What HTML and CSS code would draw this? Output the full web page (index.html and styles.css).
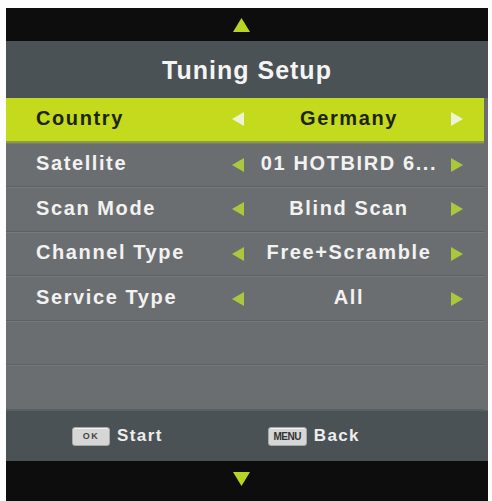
FILE: index.html
```html
<!DOCTYPE html>
<html lang="en">
<head>
    <meta charset="UTF-8">
    <meta name="viewport" content="width=device-width, initial-scale=1.0">
    <title>Tuning Setup</title>
    <link rel="stylesheet" href="styles.css">
</head>
<body>
    <div class="osd">
        <div class="nav-bar nav-top">
            <svg class="nav-arrow" width="17" height="14" viewBox="0 0 17 14"><polygon points="8.5,0 17,14 0,14" /></svg>
        </div>

        <div class="title">Tuning Setup</div>

        <div class="menu">
            <div class="row selected">
                <span class="label">Country</span>
                <svg class="arrow" width="12" height="14" viewBox="0 0 12 14"><polygon points="0,7 12,0 12,14" /></svg>
                <span class="value">Germany</span>
                <svg class="arrow" width="12" height="14" viewBox="0 0 12 14"><polygon points="12,7 0,0 0,14" /></svg>
            </div>
            <div class="row">
                <span class="label">Satellite</span>
                <svg class="arrow" width="12" height="14" viewBox="0 0 12 14"><polygon points="0,7 12,0 12,14" /></svg>
                <span class="value">01 HOTBIRD 6...</span>
                <svg class="arrow" width="12" height="14" viewBox="0 0 12 14"><polygon points="12,7 0,0 0,14" /></svg>
            </div>
            <div class="row">
                <span class="label">Scan Mode</span>
                <svg class="arrow" width="12" height="14" viewBox="0 0 12 14"><polygon points="0,7 12,0 12,14" /></svg>
                <span class="value">Blind Scan</span>
                <svg class="arrow" width="12" height="14" viewBox="0 0 12 14"><polygon points="12,7 0,0 0,14" /></svg>
            </div>
            <div class="row">
                <span class="label">Channel Type</span>
                <svg class="arrow" width="12" height="14" viewBox="0 0 12 14"><polygon points="0,7 12,0 12,14" /></svg>
                <span class="value">Free+Scramble</span>
                <svg class="arrow" width="12" height="14" viewBox="0 0 12 14"><polygon points="12,7 0,0 0,14" /></svg>
            </div>
            <div class="row">
                <span class="label">Service Type</span>
                <svg class="arrow" width="12" height="14" viewBox="0 0 12 14"><polygon points="0,7 12,0 12,14" /></svg>
                <span class="value">All</span>
                <svg class="arrow" width="12" height="14" viewBox="0 0 12 14"><polygon points="12,7 0,0 0,14" /></svg>
            </div>
            <div class="row empty"></div>
            <div class="row empty"></div>
        </div>

        <div class="footer">
            <div class="hint">
                <span class="key">OK</span>
                <span>Start</span>
            </div>
            <div class="hint">
                <span class="key key-menu">MENU</span>
                <span>Back</span>
            </div>
        </div>

        <div class="nav-bar nav-bottom">
            <svg class="nav-arrow" width="17" height="14" viewBox="0 0 17 14"><polygon points="0,0 17,0 8.5,14" /></svg>
        </div>
    </div>
</body>
</html>
```

FILE: styles.css
```css
/* Base */
* {
    margin: 0;
    padding: 0;
    box-sizing: border-box;
}

body {
    background-color: #fdfdfd;
    font-family: 'Liberation Sans', Arial, sans-serif;
    font-weight: bold;
}

/* OSD panel */
.osd {
    width: 482px;
    margin: 8px 0 0 6px;
    background-color: #6b6e71;
}

.nav-bar {
    display: flex;
    justify-content: center;
    align-items: center;
    background-color: #0d0d0d;
    padding-right: 11px;
}

.nav-top {
    height: 33px;
}

.nav-bottom {
    height: 40px;
    padding-bottom: 4px;
}

.nav-arrow polygon {
    fill: #b9d325;
}

/* Title */
.title {
    height: 57px;
    display: flex;
    justify-content: center;
    align-items: center;
    background-color: #4b5255;
    color: #f4f4f4;
    font-size: 25px;
    letter-spacing: 1px;
    padding-top: 2px;
}

/* Menu rows */
.menu {
    display: grid;
    grid-template-rows: repeat(7, 1fr);
    height: 312px;
}

.row {
    display: grid;
    grid-template-columns: 196px 12px 1fr 12px;
    align-items: center;
    padding: 0 21px 0 30px;
    margin-right: 4px;
    color: #f2f2f2;
    font-size: 20px;
    letter-spacing: 1.6px;
    background-color: #6b6e71;
    border-top: 1px solid #777a7d;
    border-bottom: 1px solid #5d6063;
}

.label {
    padding-bottom: 2px;
}

.row .arrow polygon {
    fill: #a9c83b;
}

.value {
    text-align: center;
    padding: 0 0 2px 3px;
    white-space: nowrap;
}

.row.selected {
    background-color: #c4da1c;
    color: #1c240c;
    border-top: none;
    border-bottom: 2px solid #8f9c3a;
}

.row.selected .arrow polygon {
    fill: #eef3d6;
}

/* Footer */
.footer {
    height: 51px;
    display: flex;
    align-items: center;
    gap: 105px;
    padding-left: 66px;
    background-color: #4b5255;
    border-top: 1px solid #5a6064;
    color: #eeeeee;
    font-size: 17px;
    letter-spacing: 1.4px;
}

.hint {
    display: flex;
    align-items: center;
    gap: 7px;
}

.key {
    width: 38px;
    height: 19px;
    display: flex;
    justify-content: center;
    align-items: center;
    background-color: #d6d6d6;
    border: 1px solid #a8a8a8;
    border-radius: 3px;
    box-shadow: inset 0 1px 0 #f2f2f2;
    color: #444;
    font-size: 9px;
    letter-spacing: 1.5px;
}

.key-menu {
    width: 39px;
    color: #333;
    font-size: 10px;
    letter-spacing: -0.5px;
}
```
